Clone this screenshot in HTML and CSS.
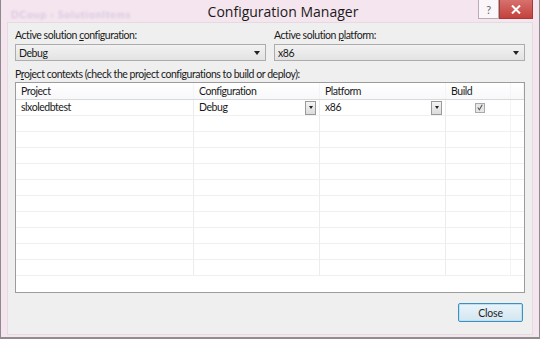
FILE: index.html
```html
<!DOCTYPE html>
<html>
<head>
<meta charset="utf-8">
<link rel="stylesheet" href="styles.css">
</head>
<body>
<div class="window">
  <div class="titlebar">
    <span class="crumb">DCoup › SolutionItems</span>
    <span class="title">Configuration Manager</span>
    <div class="caption-buttons">
      <div class="cap-btn help">?</div>
      <div class="cap-btn close">
        <svg width="10" height="9" viewBox="0 0 10 9"><path d="M1 0.5 L9 8.5 M9 0.5 L1 8.5" stroke="#fff" stroke-width="2"/></svg>
      </div>
    </div>
  </div>
  <div class="client">
    <div class="selectors">
      <div class="field">
        <label>Active solution <u>c</u>onfiguration:</label>
        <div class="combo"><span>Debug</span><span class="arrow"></span></div>
      </div>
      <div class="field">
        <label>Active solution <u>p</u>latform:</label>
        <div class="combo"><span>x86</span><span class="arrow"></span></div>
      </div>
    </div>
    <div class="contexts-label">P<u>r</u>oject contexts (check the project configurations to build or deploy):</div>
    <div class="grid">
      <div class="row head">
        <div class="cell">Project</div>
        <div class="cell">Configuration</div>
        <div class="cell">Platform</div>
        <div class="cell">Build</div>
        <div class="cell"></div>
      </div>
      <div class="row">
        <div class="cell">slxoledbtest</div>
        <div class="cell drop">Debug<span class="mini"><span class="arrow"></span></span></div>
        <div class="cell drop">x86<span class="mini"><span class="arrow"></span></span></div>
        <div class="cell center"><span class="check"><svg width="9" height="9" viewBox="0 0 9 9"><path d="M2 4.5 L3.8 7 L7 1.5" stroke="#555" stroke-width="1.2" fill="none"/></svg></span></div>
        <div class="cell"></div>
      </div>
      <div class="row"><div class="cell"></div><div class="cell"></div><div class="cell"></div><div class="cell"></div><div class="cell"></div></div>
      <div class="row"><div class="cell"></div><div class="cell"></div><div class="cell"></div><div class="cell"></div><div class="cell"></div></div>
      <div class="row"><div class="cell"></div><div class="cell"></div><div class="cell"></div><div class="cell"></div><div class="cell"></div></div>
      <div class="row"><div class="cell"></div><div class="cell"></div><div class="cell"></div><div class="cell"></div><div class="cell"></div></div>
      <div class="row"><div class="cell"></div><div class="cell"></div><div class="cell"></div><div class="cell"></div><div class="cell"></div></div>
      <div class="row"><div class="cell"></div><div class="cell"></div><div class="cell"></div><div class="cell"></div><div class="cell"></div></div>
      <div class="row"><div class="cell"></div><div class="cell"></div><div class="cell"></div><div class="cell"></div><div class="cell"></div></div>
      <div class="row"><div class="cell"></div><div class="cell"></div><div class="cell"></div><div class="cell"></div><div class="cell"></div></div>
      <div class="row"><div class="cell"></div><div class="cell"></div><div class="cell"></div><div class="cell"></div><div class="cell"></div></div>
      <div class="row"><div class="cell"></div><div class="cell"></div><div class="cell"></div><div class="cell"></div><div class="cell"></div></div>
    </div>
    <div class="footer">
      <button class="btn">Close</button>
    </div>
  </div>
</div>
</body>
</html>
```

FILE: styles.css
```css
* { box-sizing: border-box; }
html, body { margin: 0; padding: 0; }
body {
  width: 540px;
  height: 339px;
  overflow: hidden;
  font-family: Lato, "Open Sans", sans-serif;
  font-size: 10.5px;
  letter-spacing: -0.45px;
  color: #1a1a1a;
  background: #fff;
}
u { text-decoration: underline; text-underline-offset: 1px; }
.window {
  width: 540px;
  height: 339px;
  display: flex;
  flex-direction: column;
  background: #f4e5ee;
  border: 1px solid #8d8a8c;
  border-top: none;
  border-bottom: 2px solid #8f8b8e;
}
.titlebar {
  height: 22px;
  display: flex;
  align-items: center;
  position: relative;
  flex-shrink: 0;
}
.crumb {
  position: absolute;
  left: 10px;
  top: 8px;
  font-size: 10px;
  letter-spacing: 1px;
  color: #cdbde0;
  filter: blur(1px);
}
.title {
  flex: 1;
  text-align: center;
  padding-left: 26px;
  font-size: 14px;
  letter-spacing: 0;
  color: #1a1a1a;
  font-family: "Open Sans", "Noto Sans", sans-serif;
}
.caption-buttons {
  position: absolute;
  right: 6px;
  top: 0;
  display: flex;
}
.cap-btn {
  height: 19px;
  display: flex;
  align-items: center;
  justify-content: center;
}
.help {
  width: 21px;
  background: #fbf6f9;
  border: 1px solid #b5aeb2;
  border-top: none;
  color: #666;
  font-size: 11px;
}
.close {
  width: 34px;
  background: linear-gradient(#d6716d, #c4413d);
  border: 1px solid #a53a37;
  border-top: none;
}
.client {
  flex: 1;
  margin: 0 6px 2px 6px;
  background: #efefef;
  border: 1px solid #e2dce0;
  padding: 4px 7px 0 7px;
  display: flex;
  flex-direction: column;
}
.selectors {
  display: flex;
  gap: 8px;
}
.field {
  flex: 1;
  display: flex;
  flex-direction: column;
}
.field label {
  height: 17px;
  line-height: 17px;
}
.combo {
  height: 17px;
  border: 1px solid #acacac;
  background: linear-gradient(#f2f2f2, #e3e3e3);
  display: flex;
  align-items: center;
  justify-content: space-between;
  padding: 0 5px 0 3px;
}
.arrow {
  width: 0;
  height: 0;
  border-left: 3px solid transparent;
  border-right: 3px solid transparent;
  border-top: 4px solid #222;
}
.contexts-label {
  margin-top: 6px;
  height: 15px;
  line-height: 15px;
}
.grid {
  margin-top: 0;
  height: 211px;
  border: 1px solid #9c9c9c;
  background: #fff;
  display: flex;
  flex-direction: column;
  overflow: hidden;
}
.row {
  display: grid;
  grid-template-columns: 178px 126px 126px 65px 1fr;
  height: 16px;
  border-bottom: 1px solid #f0f0f0;
  flex-shrink: 0;
}
.row.head {
  height: 17px;
  border-bottom: 1px solid #d9d9d9;
  background: linear-gradient(#ffffff, #f7f8fa);
}
.row .cell {
  border-right: 1px solid #ececec;
  padding-left: 5px;
  line-height: 15px;
  display: flex;
  align-items: center;
  white-space: nowrap;
}
.row .cell:last-child { border-right: none; }
.row.head .cell { border-right: 1px solid #f4f4f4; }
.row .cell:nth-child(4) { border-right: 1px solid #f4f4f4; }
.drop { justify-content: space-between; padding-right: 3px; }
.mini {
  width: 11px;
  height: 14px;
  border: 1px solid #9a9a9a;
  background: linear-gradient(#f4f4f4, #dcdcdc);
  display: flex;
  align-items: center;
  justify-content: center;
}
.mini .arrow { border-left-width: 2.5px; border-right-width: 2.5px; border-top-width: 3px; }
.center { justify-content: center; padding-left: 4px !important; }
.check {
  width: 10px;
  height: 10px;
  border: 1px solid #a9a9a9;
  background: #e6e6e6;
  display: flex;
  align-items: center;
  justify-content: center;
}
.footer {
  display: flex;
  justify-content: flex-end;
  padding-top: 10px;
  padding-right: 2px;
}
.btn {
  width: 65px;
  height: 19px;
  border: 1px solid #3c91c1;
  border-radius: 2px;
  background: linear-gradient(#eaf4fa, #d3e6f0);
  font-family: Lato, "Open Sans", sans-serif;
  font-size: 10.5px;
  letter-spacing: -0.2px;
  color: #1e1e1e;
  padding: 0;
  box-shadow: inset 0 0 0 1px #bde0f3;
}
```
